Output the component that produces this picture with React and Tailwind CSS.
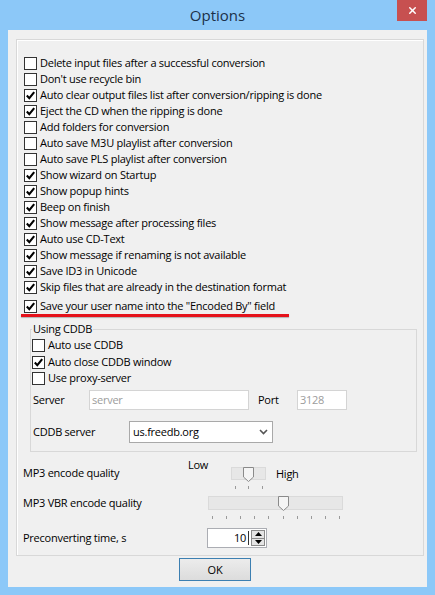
import { X } from 'lucide-react';

const FONT = { fontFamily: '"Open Sans", "Noto Sans", sans-serif' };

const OPTIONS = [
  ['Delete input files after a successful conversion', false],
  ["Don't use recycle bin", false],
  ['Auto clear output files list after conversion/ripping is done', true],
  ['Eject the CD when the ripping is done', true],
  ['Add folders for conversion', false],
  ['Auto save M3U playlist after conversion', false],
  ['Auto save PLS playlist after conversion', false],
  ['Show wizard on Startup', true],
  ['Show popup hints', true],
  ['Beep on finish', true],
  ['Show message after processing files', true],
  ['Auto use CD-Text', true],
  ['Show message if renaming is not available', true],
  ['Save ID3 in Unicode', true],
  ['Skip files that are already in the destination format', true],
];

function Box({ checked }) {
  return (
    <span className="flex h-[13px] w-[13px] shrink-0 items-center justify-center border border-[#333] bg-white">
      {checked && (
        <svg width="11" height="11" viewBox="0 0 11 11">
          <path d="M1.8 5.6 L4.3 8.2 L9.2 2.2" fill="none" stroke="#000" strokeWidth="2.1" />
        </svg>
      )}
    </span>
  );
}

function Check({ label, checked, className = '' }) {
  return (
    <div className={`flex h-4 items-center ${className}`}>
      <Box checked={checked} />
      <span className="ml-[3px] whitespace-nowrap">{label}</span>
    </div>
  );
}

function Thumb({ left }) {
  return (
    <svg className="absolute -top-[1px]" style={{ left }} width="11" height="15" viewBox="0 0 11 15">
      <path d="M0.5 0.5 H10.5 V10 L5.5 14.5 L0.5 10 Z" fill="#f4f4f4" stroke="#8a8a8a" />
    </svg>
  );
}

function Ticks({ xs }) {
  return (
    <div className="relative mt-[6px] h-[3px]">
      {xs.map((x) => (
        <span key={x} className="absolute top-0 h-[3px] w-px bg-[#9a9a9a]" style={{ left: x }} />
      ))}
    </div>
  );
}

export default function App() {
  const vbrTicks = [4, 18, 32, 46, 60, 75, 89, 103, 117, 131];

  return (
    <div
      className="flex h-[595px] w-[435px] flex-col bg-[#8cc8f8] text-[11px] leading-4 tracking-[-0.25px] text-black"
      style={FONT}
    >
      {/* title bar */}
      <div className="relative flex h-[30px] shrink-0 items-center justify-center">
        <span className="text-[15px] tracking-normal text-[#1b3048]">Options</span>
        <div className="absolute right-[8px] top-0 flex h-[21px] w-[30px] items-center justify-center bg-[#c75050]">
          <X size={11} strokeWidth={3.2} color="#fff" />
        </div>
      </div>

      {/* client */}
      <div className="mx-[8px] mb-[8px] flex flex-1 flex-col bg-[#f0f0f0]">
        <div className="ml-[8px] mr-[3px] mt-[9px] border border-[#d8d8d8] pb-[7px] pt-[15px] shadow-[inset_1px_1px_0_#fff]">
          <div className="pl-[7px]">
            {OPTIONS.map(([label, checked]) => (
              <Check key={label} label={label} checked={checked} />
            ))}
            <Check className="mt-[3px]" label={'Save your user name into the "Encoded By" field'} checked />
          </div>
          <div className="ml-[4px] h-[3px] w-[268px] bg-[#e5121b] shadow-[0_1px_1px_rgba(0,0,0,0.25)]" />

          <fieldset className="ml-[13px] mr-[6px] mt-[4px] border border-[#d8d8d8] pb-[8px] pl-[1px]">
            <legend className="px-[1px] leading-4">Using CDDB</legend>
            <Check label="Auto use CDDB" checked={false} />
            <Check className="mt-[1px]" label="Auto close CDDB window" checked />
            <Check label="Use proxy-server" checked={false} />

            <div className="mt-[4px] flex h-[20px] items-center">
              <span className="w-[57px] pl-[1px]">Server</span>
              <div className="flex h-[20px] w-[160px] items-center border border-[#d4d4d4] bg-white px-[2px] text-[#9c9c9c]">
                server
              </div>
              <span className="w-[48px] pl-[9px]">Port</span>
              <div className="flex h-[20px] w-[50px] items-center border border-[#d4d4d4] bg-white px-[2px] text-[#9c9c9c]">
                3128
              </div>
            </div>

            <div className="mt-[11px] flex h-[22px] items-center">
              <span className="w-[97px] pl-[1px]">CDDB server</span>
              <div className="flex h-[22px] w-[144px] items-center justify-between border border-[#a9a9a9] bg-white pl-[3px] pr-[4px]">
                <span>us.freedb.org</span>
                <svg width="9" height="6" viewBox="0 0 9 6">
                  <path d="M1 1 L4.5 4.5 L8 1" fill="none" stroke="#555" strokeWidth="1.6" />
                </svg>
              </div>
            </div>
          </fieldset>

          {/* MP3 encode quality */}
          <div className="mt-[5px] flex items-start pl-[6px]">
            <span className="mt-[8px] w-[165px]">MP3 encode quality</span>
            <span className="w-[43px]">Low</span>
            <div className="mt-[10px] w-[35px]">
              <div className="relative h-[13px] border border-[#dadada] bg-[#e7e7e7]">
                <Thumb left={11} />
              </div>
              <Ticks xs={[4, 17, 31]} />
            </div>
            <span className="ml-[10px] mt-[9px]">High</span>
          </div>

          {/* MP3 VBR encode quality */}
          <div className="mt-[6px] flex items-start pl-[6px]">
            <span className="w-[185px]">MP3 VBR encode quality</span>
            <div className="mt-[1px] w-[135px]">
              <div className="relative h-[14px] border border-[#dadada] bg-[#e7e7e7]">
                <Thumb left={69} />
              </div>
              <Ticks xs={vbrTicks} />
            </div>
          </div>

          {/* Preconverting time */}
          <div className="mt-[9px] flex h-[20px] items-center pl-[6px]">
            <span className="w-[184px]">Preconverting time, s</span>
            <div className="flex h-[20px] w-[60px] items-center border border-[#abadb3] bg-white">
              <span className="flex-1 pr-[2px] text-right">10</span>
              <span className="h-[14px] w-px bg-[#333]" />
              <div className="ml-[2px] mr-[1px] flex h-[16px] w-[14px] flex-col border border-[#8a8a8a] bg-[#e4e4e4]">
                <div className="flex flex-1 items-center justify-center border-b border-[#8a8a8a]">
                  <svg width="7" height="4" viewBox="0 0 7 4"><path d="M0 4 L3.5 0 L7 4 Z" fill="#000" /></svg>
                </div>
                <div className="flex flex-1 items-center justify-center">
                  <svg width="7" height="4" viewBox="0 0 7 4"><path d="M0 0 L3.5 4 L7 0 Z" fill="#000" /></svg>
                </div>
              </div>
            </div>
          </div>
        </div>

        <div className="ml-[171px] mt-[2px] flex h-[23px] w-[72px] items-center justify-center border border-[#3c7fb1] bg-gradient-to-b from-[#ececec] to-[#dcdcdc]">
          OK
        </div>
      </div>
    </div>
  );
}
